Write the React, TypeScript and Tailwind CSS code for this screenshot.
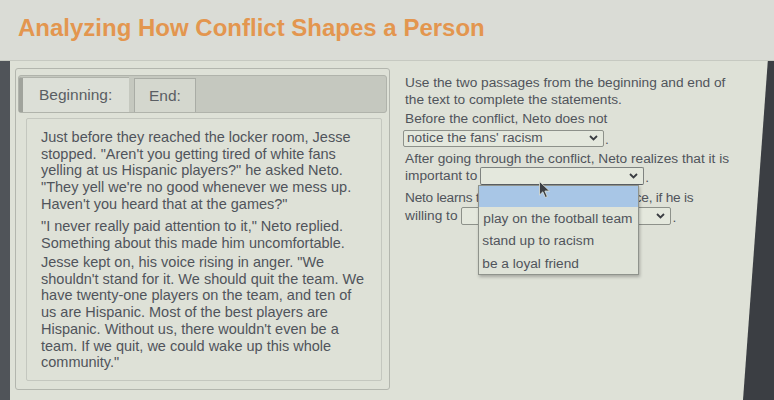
import React from "react";

const Chevron = () => (
  <svg width="9" height="6" viewBox="0 0 9 6" className="shrink-0">
    <path d="M1 1l3.5 3.5L8 1" stroke="#3a3d42" strokeWidth="1.8" fill="none" />
  </svg>
);

function Select({
  width,
  value,
  open,
  children,
}: {
  width: string;
  value?: string;
  open?: boolean;
  children?: React.ReactNode;
}) {
  return (
    <div
      className={`relative flex items-center h-full ${width} border ${
        open ? "border-[#7f8380] border-b-[#5b5f63]" : "border-[#8d918a]"
      } bg-[#e4e8dd] rounded-[2px] pl-[3px] pr-[5px]`}
    >
      <span className="flex-1 truncate leading-none">{value}</span>
      <Chevron />
      {children}
    </div>
  );
}

export default function App() {
  return (
    <div className="relative w-[774px] h-[400px] overflow-hidden bg-[#dee1d7] text-[#50545b] [font-family:'Liberation_Sans',Arial,sans-serif]">
      {/* header */}
      <div className="h-[61px] border-b border-[#c6c9c1] bg-[#dadcd6] pl-[18px] pt-[14px]">
        <h1 className="text-[24px] leading-[28px] font-bold text-[#e3964f]">
          Analyzing How Conflict Shapes a Person
        </h1>
      </div>

      {/* main */}
      <div className="flex h-[339px]">
        <div className="w-[10px] bg-[#505459] shrink-0" />

        {/* left panel */}
        <div className="ml-[5px] mt-[7px] w-[375px] h-[322px] shrink-0 border border-[#b3b6ae] rounded-[3px] pt-[6px] px-[2px]">
          <div className="flex h-[38px] border border-[#b0b3ab] rounded-[3px] bg-[#c5c8bf] items-end">
            <div className="flex items-center h-[35px] w-[110px] border-l-[4px] border-l-[#a0a39c] border-t border-t-[#b0b3ab] bg-[#dcdfd7] pl-[16px] text-[15.5px] text-[#5a5e63] rounded-tl-[2px]">
              Beginning:
            </div>
            <div className="flex items-center h-[34px] w-[62px] ml-[5px] border border-b-0 border-[#a9aca5] bg-[#d4d7ce] pl-[14px] text-[15.5px] text-[#5a5e63]">
              End:
            </div>
          </div>
          <div className="ml-[8px] mr-[5px] mt-[5px] h-[263px] border border-[#c4c7bf] rounded-[2px] pl-[14px] pt-[10px] text-[14.5px] leading-[16.7px]">
            <p>
              Just before they reached the locker room, Jesse
              <br />
              stopped. "Aren't you getting tired of white fans
              <br />
              yelling at us Hispanic players?" he asked Neto.
              <br />
              "They yell we're no good whenever we mess up.
              <br />
              Haven't you heard that at the games?"
            </p>
            <p className="mt-[5.5px]">
              "I never really paid attention to it," Neto replied.
              <br />
              Something about this made him uncomfortable.
            </p>
            <p className="mt-[2.6px]">
              Jesse kept on, his voice rising in anger. "We
              <br />
              shouldn't stand for it. We should quit the team. We
              <br />
              have twenty-one players on the team, and ten of
              <br />
              us are Hispanic. Most of the best players are
              <br />
              Hispanic. Without us, there wouldn't even be a
              <br />
              team. If we quit, we could wake up this whole
              <br />
              community."
            </p>
          </div>
        </div>

        {/* right column */}
        <div className="ml-[15px] w-[335px] shrink-0 pt-[12.5px] text-[13.7px] leading-[17px] flex flex-col">
          <p>
            Use the two passages from the beginning and end of
            <br />
            the text to complete the statements.
          </p>
          <p className="mt-[2px]">Before the conflict, Neto does not</p>
          <div className="mt-[3px] h-[17px] -ml-[2px] flex items-end">
            <Select width="w-[201px]" value="notice the fans' racism" />
            <span className="ml-[1px] leading-none">.</span>
          </div>
          <p className="mt-[3px] whitespace-nowrap">
            After going through the conflict, Neto realizes that it is
          </p>
          <div className="mt-[0.5px] h-[18px] flex items-end relative z-20">
            <span className="leading-[18px]">important to</span>
            <div className="ml-[3px] h-full">
              <Select width="w-[164px]" open>
                <div className="absolute left-[-3px] top-[17px] w-[161px] border border-[#8f938c] bg-[#dfe3d8] shadow-[1px_2px_3px_rgba(0,0,0,0.25)] flex flex-col">
                  <div className="h-[21px] bg-[#a8c6e6]" />
                  <div className="h-[22px] flex items-center pl-[4px] whitespace-nowrap">
                    play on the football team
                  </div>
                  <div className="h-[23px] flex items-center pl-[3px] whitespace-nowrap">
                    stand up to racism
                  </div>
                  <div className="h-[22px] flex items-center pl-[3px] whitespace-nowrap">
                    be a loyal friend
                  </div>
                </div>
              </Select>
            </div>
            <span className="ml-[1px] leading-none">.</span>
          </div>
          <p className="mt-[3.5px] whitespace-nowrap tracking-[-0.25px]">
            Neto learns that he can make a difference, if he is
          </p>
          <div className="mt-[1.5px] h-[18px] flex items-end">
            <span className="leading-[18px]">willing to</span>
            <div className="ml-[3px] h-full">
              <Select width="w-[210px]" />
            </div>
            <span className="ml-[2px] leading-none">.</span>
          </div>
        </div>

        <div className="flex-1" />
        <div className="w-[31px] shrink-0 bg-[#3b3e43] [clip-path:polygon(80%_0,100%_0,100%_100%,0_100%)]" />
      </div>

      {/* mouse cursor */}
      <svg
        className="absolute left-[539px] top-[181px] z-30"
        width="12"
        height="18"
        viewBox="0 0 12 18"
      >
        <path
          d="M0.5 0.5 L0.5 14 L3.8 10.8 L6.3 16.5 L8.3 15.6 L5.9 10 L10.5 10 Z"
          fill="#3c3f44"
          stroke="#dfe3d8"
          strokeWidth="0.8"
        />
      </svg>
    </div>
  );
}
